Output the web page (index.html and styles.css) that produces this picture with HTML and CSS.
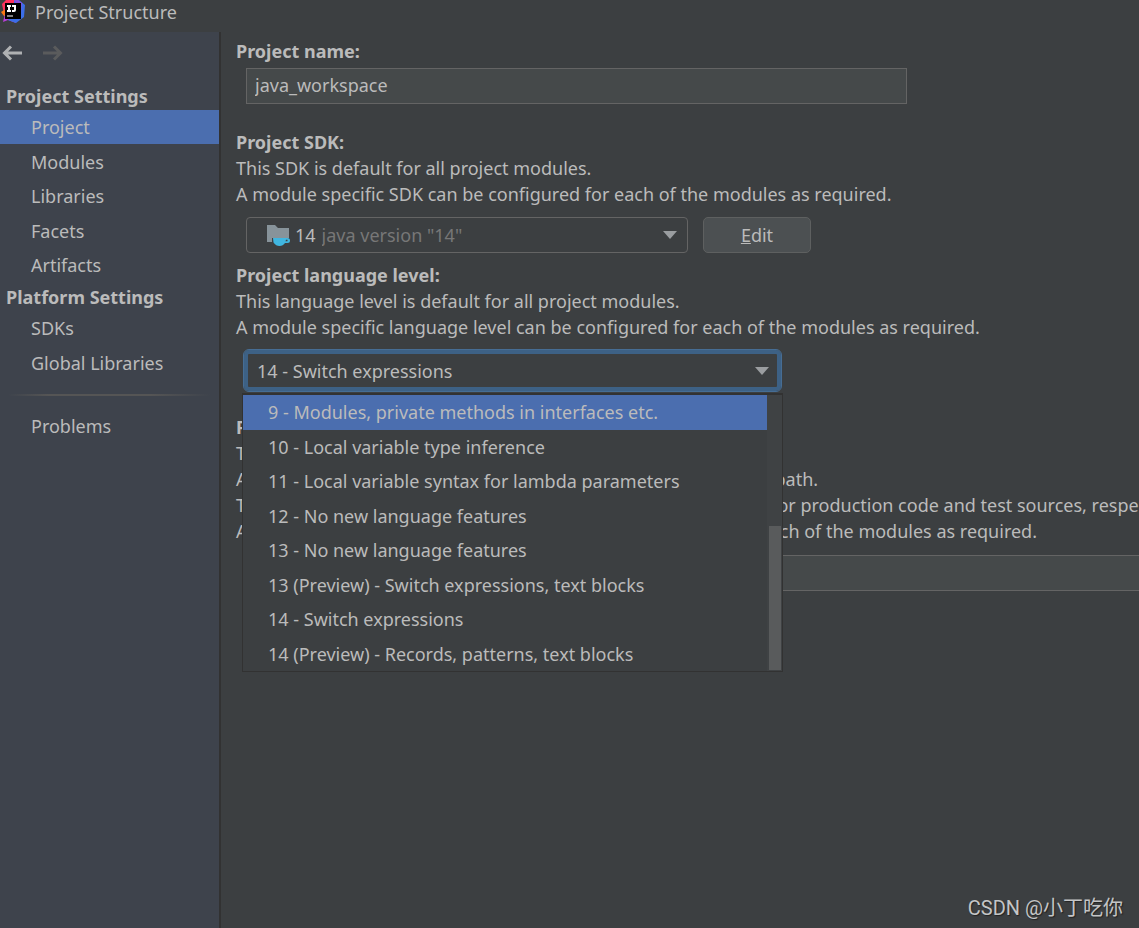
FILE: index.html
```
<!DOCTYPE html>
<html lang="en">
<head>
<meta charset="utf-8">
<title>Project Structure</title>
<link rel="stylesheet" href="styles.css">
</head>
<body>
<header class="titlebar">
  <svg class="logo" width="26" height="26" viewBox="0 0 26 26" aria-hidden="true">
    <path d="M2 4 6 0H15L18 8 12 16 4 14Z" fill="#fe315d"/>
    <path d="M1 12 6 9 10 18 4 16Z" fill="#f97a12"/>
    <path d="M3 22 5 14 14 17 16 23 8 20Z" fill="#b740d8"/>
    <path d="M14 0H19L25 5 24 17 16 23 8 20 14 12Z" fill="#3b6ee8"/>
    <path d="M14 0H18L22 3 21 12 17 6Z" fill="#8a4fd8"/>
    <rect x="5" y="3" width="16" height="16" fill="#000"/>
    <path d="M7 6h4M9 6v5M7 11h4M12 6h3v4q0 1-1 1h-2" fill="none" stroke="#fff" stroke-width="2"/>
    <path d="M7 16h6" stroke="#fff"/>
  </svg>
  <h1 class="title">Project Structure</h1>
</header>
<div class="window">
  <nav class="sidebar">
    <div class="history">
      <button class="arrow" aria-label="Back"><svg width="22" height="16" viewBox="0 0 22 16"><path d="M21 8H3M10 1.500 3.500 8l6.500 6.500"/></svg></button>
      <button class="arrow arrow-off" aria-label="Forward" disabled><svg width="22" height="16" viewBox="0 0 22 16"><path d="M1 8h18M12 1.500 18.500 8 12 14.500"/></svg></button>
    </div>
    <h2 class="group">Project Settings</h2>
    <ul class="items items-project">
      <li><a class="item item-on" href="#project">Project</a></li>
      <li><a class="item" href="#modules">Modules</a></li>
      <li><a class="item" href="#libraries">Libraries</a></li>
      <li><a class="item" href="#facets">Facets</a></li>
      <li><a class="item" href="#artifacts">Artifacts</a></li>
    </ul>
    <h2 class="group">Platform Settings</h2>
    <ul class="items items-platform">
      <li><a class="item" href="#sdks">SDKs</a></li>
      <li><a class="item" href="#global">Global Libraries</a></li>
    </ul>
    <hr class="rule">
    <ul class="items">
      <li><a class="item" href="#problems">Problems</a></li>
    </ul>
  </nav>
  <main class="content">
    <section class="section">
      <label class="heading" for="name">Project name:</label>
      <input class="field field-name" id="name" type="text" value="java_workspace">
    </section>
    <section class="section">
      <label class="heading" for="sdk">Project SDK:</label>
      <p class="text">This SDK is default for all project modules.<br>A module specific SDK can be configured for each of the modules as required.</p>
      <div class="row">
        <div class="combo combo-sdk">
          <svg class="folder" width="25" height="24" viewBox="0 0 25 24" aria-hidden="true">
            <path d="M1 2h8l3 3h11v10H6v4H1Z" fill="#87939a"/>
            <path d="M7 15h14.500a2.300 2.300 0 0 1 0 5H19q-2 3-5.500 3T7.500 19.500Z" fill="#40b6e0"/>
            <path d="M20 16.800h1.500v1.500H19.500Z" fill="#3c3f41"/>
          </svg>
          <span>14</span>
          <select class="select select-sdk" id="sdk"><option>java version "14"</option></select>
          <svg class="caret" width="14" height="8" viewBox="0 0 14 8" aria-hidden="true"><path d="M0 0h14L7 8Z"/></svg>
        </div>
        <button class="edit"><u>E</u>dit</button>
      </div>
    </section>
    <section class="section">
      <label class="heading" for="level">Project language level:</label>
      <p class="text">This language level is default for all project modules.<br>A module specific language level can be configured for each of the modules as required.</p>
      <div class="level">
        <div class="combo combo-level">
          <select class="select" id="level"><option>14 - Switch expressions</option></select>
          <svg class="caret" width="14" height="8" viewBox="0 0 14 8" aria-hidden="true"><path d="M0 0h14L7 8Z"/></svg>
        </div>
        <div class="popup">
          <ul class="options" role="listbox" aria-label="Project language level">
            <li class="option option-on" role="option" aria-selected="true">9 - Modules, private methods in interfaces etc.</li>
            <li class="option" role="option">10 - Local variable type inference</li>
            <li class="option" role="option">11 - Local variable syntax for lambda parameters</li>
            <li class="option" role="option">12 - No new language features</li>
            <li class="option" role="option">13 - No new language features</li>
            <li class="option" role="option">13 (Preview) - Switch expressions, text blocks</li>
            <li class="option" role="option">14 - Switch expressions</li>
            <li class="option" role="option">14 (Preview) - Records, patterns, text blocks</li>
          </ul>
          <div class="track"><div class="thumb"></div></div>
        </div>
      </div>
    </section>
    <section class="section">
      <label class="heading" for="output">Project compiler output:</label>
      <p class="text">This path is used to store all project compilation results.<br>A directory corresponding to each module is created under this path.<br>This directory contains two subdirectories: Production and Test for production code and test sources, respectively.<br>A module specific compiler output path can be configured for each of the modules as required.</p>
      <input class="field field-output" id="output" type="text">
    </section>
  </main>
</div>
<footer class="mark">CSDN @小丁吃你</footer>
</body>
</html>
```
FILE: styles.css
```
* { box-sizing: border-box; }
body {
  margin: 0;
  min-height: 100vh;
  display: flex;
  flex-direction: column;
  position: relative;
  overflow: hidden;
  background: #3c3f41;
  color: #bbbbbb;
  font: 18px/26px "Noto Sans", "Open Sans", sans-serif;
}
h1, h2, p, ul { margin: 0; padding: 0; font-size: inherit; }
ul { list-style: none; }
input, select, button { font: inherit; color: inherit; }
.titlebar { display: flex; height: 32px; gap: 9px; }
.title { font-weight: 400; line-height: 24px; }
.window { flex: 1; display: flex; min-width: 0; }
.sidebar { flex: 0 0 221px; background: #3e434c; border-right: 2px solid #323232; }
.history { display: flex; gap: 19px; height: 50px; padding-top: 13px; padding-left: 1px; }
.arrow { display: block; height: 16px; padding: 0; border: 0; background: none; }
.arrow svg { display: block; fill: none; stroke: #afb1b3; stroke-width: 3; }
.arrow-off svg { stroke: #5a5b5c; }
.group { padding-left: 6px; line-height: 28px; font-weight: 700; }
.items { display: grid; grid-auto-rows: 1fr; }
.items-project { height: 173px; }
.items-platform { height: 70px; }
.item { display: block; padding-left: 31px; line-height: 34px; color: inherit; text-decoration: none; }
.item-on { background: #4b6eaf; }
.rule { height: 2px; margin: 13px 8px; border: 0; background: linear-gradient(90deg, transparent, #555555 20%, #555555 70%, transparent); }
.content { flex: 1; min-width: 0; padding: 7px 0 0 15px; overflow: hidden; }
.section { display: flex; flex-direction: column; }
.heading { font-weight: 700; line-height: 25px; white-space: nowrap; }
.text { white-space: nowrap; }
.field { height: 36px; margin-left: 10px; padding: 0 8px 2px; border: 1px solid #646464; background: #45494a; }
.field-name { width: 661px; max-width: 100%; margin-top: 4px; margin-bottom: 26px; }
.field-output { margin-top: 11px; border-right: 0; }
.row { display: flex; gap: 15px; margin: 10px 0 10px 10px; }
.combo { display: flex; align-items: center; height: 36px; padding: 0 10px; border: 1px solid #646464; border-radius: 4px; }
.combo-sdk { width: 442px; padding-left: 19px; gap: 6px; }
.folder { margin-right: -2px; }
.select { flex: 1; min-width: 0; height: 34px; padding: 0; border: 0; outline: 0; appearance: none; background: transparent; }
.select-sdk { color: #777777; }
.caret { fill: #9a9da0; }
.edit { width: 108px; padding: 0; border: 1px solid #5e6060; border-radius: 5px; background: #4c5052; }
.level { position: relative; width: 539px; margin: 9px 0 23px 7px; }
.combo-level { height: 43px; border: 1px solid #466d94; box-shadow: inset 0 0 0 4px #3d6185; border-radius: 6px; padding: 0 12px 0 13px; }
.popup { position: absolute; top: 44px; left: -1px; display: flex; width: 541px; height: 279px; border: 1px solid #323232; border-top-width: 2px; background: #3c3f41; }
.options { flex: 1; display: grid; grid-auto-rows: 1fr; }
.option { padding-left: 25px; line-height: 34px; }
.option-on { background: #4b6eaf; }
.track { width: 15px; padding: 0 1px 1px 2px; display: flex; align-items: flex-end; background: #3f4244; }
.thumb { width: 12px; height: 144px; background: #595b5c; }
.mark { position: absolute; right: 16px; bottom: 6px; font: 20px/28px Roboto, "Noto Sans CJK SC", sans-serif; color: #c4c5c6; text-shadow: 1px 1px 1px #222222; }
```
